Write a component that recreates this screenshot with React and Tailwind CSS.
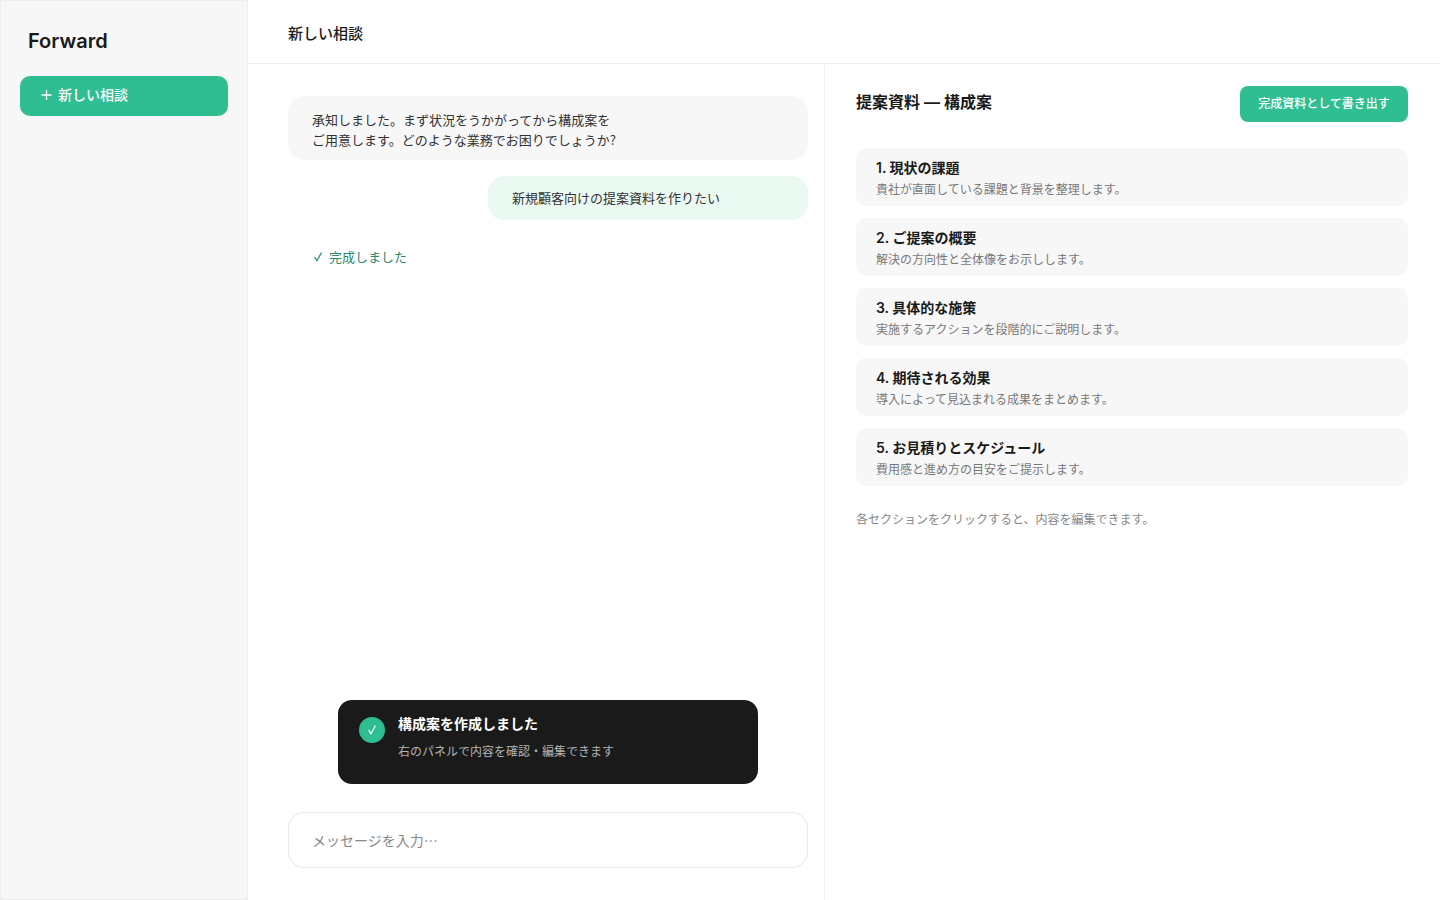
import React, { useState } from 'react';

const sections = [
  { title: '1. 現状の課題', desc: '貴社が直面している課題と背景を整理します。' },
  { title: '2. ご提案の概要', desc: '解決の方向性と全体像をお示しします。' },
  { title: '3. 具体的な施策', desc: '実施するアクションを段階的にご説明します。' },
  { title: '4. 期待される効果', desc: '導入によって見込まれる成果をまとめます。' },
  { title: '5. お見積りとスケジュール', desc: '費用感と進め方の目安をご提示します。' },
];

function CheckMark({ className }) {
  return (
    <svg viewBox="0 0 10 12" className={className} fill="none" stroke="currentColor" aria-hidden="true">
      <path d="M1.8 6.4 L4 9.8 L8.2 2" strokeWidth="1.2" strokeLinecap="round" strokeLinejoin="round" />
    </svg>
  );
}

function Sidebar() {
  return (
    <aside className="w-62 shrink-0 border border-[#eeeeee] bg-[#f7f7f7] px-[19px] pt-6">
      <div className="px-2 text-xl leading-8 font-semibold">Forward</div>
      <button className="mt-[19px] flex h-10 w-full items-center gap-1.5 rounded-[10px] bg-[#2fbe91] px-5 pb-0.5 text-sm font-medium text-white">
        <svg viewBox="0 0 12 12" className="size-3" fill="none" stroke="currentColor" aria-hidden="true">
          <path d="M6.5 1 V11 M1.5 6 H11.5" strokeWidth="1.3" />
        </svg>
        <span>新しい相談</span>
      </button>
    </aside>
  );
}

function Chat() {
  const [message, setMessage] = useState('');

  return (
    <section className="flex flex-col pt-8 pr-4 pb-8 pl-10">
      {/* Conversation */}
      <div className="rounded-2xl bg-[#f7f7f7] px-6 pt-3.5 pb-2.5 font-['Noto_Sans_CJK_JP',sans-serif] text-[13px] leading-5 text-[#333333]">
        承知しました。まず状況をうかがってから構成案を
        <br />
        ご用意します。どのような業務でお困りでしょうか?
      </div>
      <div className="mt-4 ml-50 rounded-2xl bg-[#ebf9f3] px-6 py-3 text-[13px] leading-5 text-[#333333]">
        新規顧客向けの提案資料を作りたい
      </div>
      <div className="mt-[27px] flex items-center gap-1.5 px-[25px] text-[13px] leading-5 text-[#2b8a68]">
        <CheckMark className="h-3 w-2.5" />
        <span>完成しました</span>
      </div>

      {/* Toast */}
      <div role="status" className="mx-auto mt-auto flex w-full max-w-105 gap-[13px] rounded-[14px] bg-[#1a1a1a] px-[21px] pt-3 pb-[22px] text-white">
        <span className="mt-[5px] flex size-[26px] shrink-0 items-center justify-center rounded-full bg-[#2fbe91]">
          <CheckMark className="h-3 w-2.5" />
        </span>
        <div>
          <p className="text-sm leading-6 font-semibold">構成案を作成しました</p>
          <p className="mt-1.5 text-xs leading-5 text-[#b3b3b3]">右のパネルで内容を確認・編集できます</p>
        </div>
      </div>

      <input
        type="text"
        aria-label="メッセージを入力"
        placeholder="メッセージを入力…"
        value={message}
        onChange={(e) => setMessage(e.target.value)}
        className="mt-7 h-14 w-full rounded-2xl border border-[#e8e8e8] bg-white px-[23px] font-['Noto_Sans_CJK_JP',sans-serif] text-sm outline-none placeholder:text-[#888888]"
      />
    </section>
  );
}

function Outline() {
  return (
    <section className="border-l border-[#eeeeee] pt-[22px] pr-8 pl-[31px]">
      <div className="flex items-start justify-between">
        <h2 className="py-1 text-base leading-6 font-semibold">提案資料 — 構成案</h2>
        <button className="h-9 w-42 rounded-lg bg-[#2fbe91] text-xs font-medium text-white">
          完成資料として書き出す
        </button>
      </div>

      <ul className="mt-[26px] space-y-3">
        {sections.map((s) => (
          <li key={s.title}>
            <button className="block w-full rounded-[10px] bg-[#f7f7f7] px-5 pt-2.5 pb-1.5 text-left">
              <span className="block text-sm leading-5 font-semibold">{s.title}</span>
              <span className="mt-0.5 block text-xs leading-5 text-[#777777]">{s.desc}</span>
            </button>
          </li>
        ))}
      </ul>

      <p className="mt-6 text-xs leading-5 text-[#888888]">各セクションをクリックすると、内容を編集できます。</p>
    </section>
  );
}

export default function App() {
  return (
    <div className="flex min-h-screen bg-white font-[Inter,'Noto_Sans_CJK_JP',sans-serif] text-[#1a1a1a]">
      <Sidebar />
      <main className="flex min-w-0 flex-1 flex-col">
        <header className="flex h-16 shrink-0 items-center border-b border-[#eeeeee] px-10 pt-1">
          <h1 className="text-[15px] leading-6 font-medium">新しい相談</h1>
        </header>
        <div className="grid flex-1 grid-cols-[72fr_77fr]">
          <Chat />
          <Outline />
        </div>
      </main>
    </div>
  );
}
